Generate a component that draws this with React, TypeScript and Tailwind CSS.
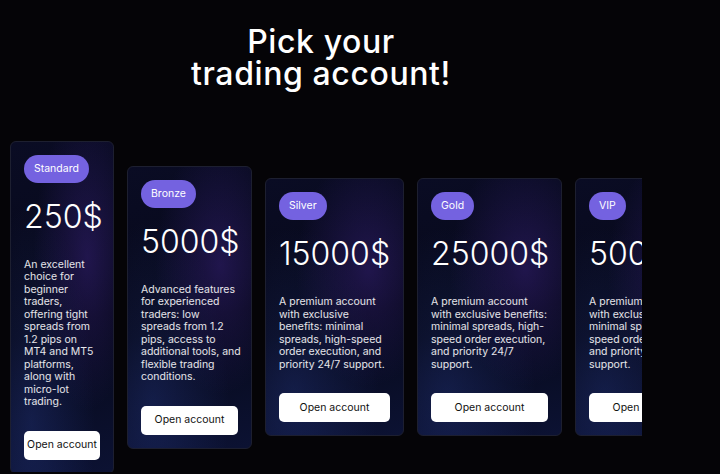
import React from "react";

interface Plan {
  name: string;
  price: string;
  text: string;
  width: string;
  textFit?: string;
}

const plans: Plan[] = [
  {
    name: "Standard",
    price: "250$",
    text: "An excellent choice for beginner traders, offering tight spreads from 1.2 pips on MT4 and MT5 platforms, along with micro-lot trading.",
    width: "w-[104px]",
  },
  {
    name: "Bronze",
    price: "5000$",
    text: "Advanced features for experienced traders: low spreads from 1.2 pips, access to additional tools, and flexible trading conditions.",
    width: "w-[125px]",
    textFit: "-mr-[3px]",
  },
  {
    name: "Silver",
    price: "15000$",
    text: "A premium account with exclusive benefits: minimal spreads, high-speed order execution, and priority 24/7 support.",
    width: "w-[139px]",
  },
  {
    name: "Gold",
    price: "25000$",
    text: "A premium account with exclusive benefits: minimal spreads, high-speed order execution, and priority 24/7 support.",
    width: "w-[145px]",
  },
  {
    name: "VIP",
    price: "50000$",
    text: "A premium account with exclusive benefits: minimal spreads, high-speed order execution, and priority 24/7 support.",
    width: "w-[145px]",
  },
];

const PlanCard: React.FC<{ plan: Plan }> = ({ plan }) => (
  <div
    className={`${plan.width} shrink-0 flex flex-col p-[13px] rounded-[6px] border border-[#1d1f30] bg-[radial-gradient(ellipse_at_75%_35%,rgba(70,40,150,0.4)_0%,transparent_50%),radial-gradient(ellipse_at_20%_85%,rgba(40,60,140,0.35)_0%,transparent_55%),linear-gradient(165deg,#0a0c24_0%,#060818_55%,#0c1233_100%)]`}
  >
    <span className="self-start h-[28px] px-[10px] flex items-center rounded-full bg-[#7462e0] text-white text-[10.5px]">
      {plan.name}
    </span>
    <div className="mt-[14px] text-[32px] leading-[40px] font-light text-white whitespace-nowrap">
      {plan.price}
    </div>
    <p className={`mt-[22px] ${plan.textFit ?? ""} text-[10.5px] leading-[12.5px] text-white/90`}>
      {plan.text}
    </p>
    <button className="mt-[22px] h-[29px] w-full rounded-[5px] bg-white text-[10.5px] text-[#111] whitespace-nowrap">
      Open account
    </button>
  </div>
);

export default function App() {
  return (
    <div className="w-[720px] h-[474px] bg-[#050407] overflow-hidden font-['Inter',sans-serif]">
      <div className="w-[642px] overflow-hidden">
        <h1 className="pt-[26px] text-center text-white text-[32px] leading-[32px] font-medium tracking-[0.6px]">
          Pick your
          <br />
          trading account!
        </h1>
        <div className="mt-[52px] h-[330px] pl-[10px] flex items-center gap-[13px]">
          {plans.map((p) => (
            <PlanCard key={p.name} plan={p} />
          ))}
        </div>
      </div>
    </div>
  );
}
